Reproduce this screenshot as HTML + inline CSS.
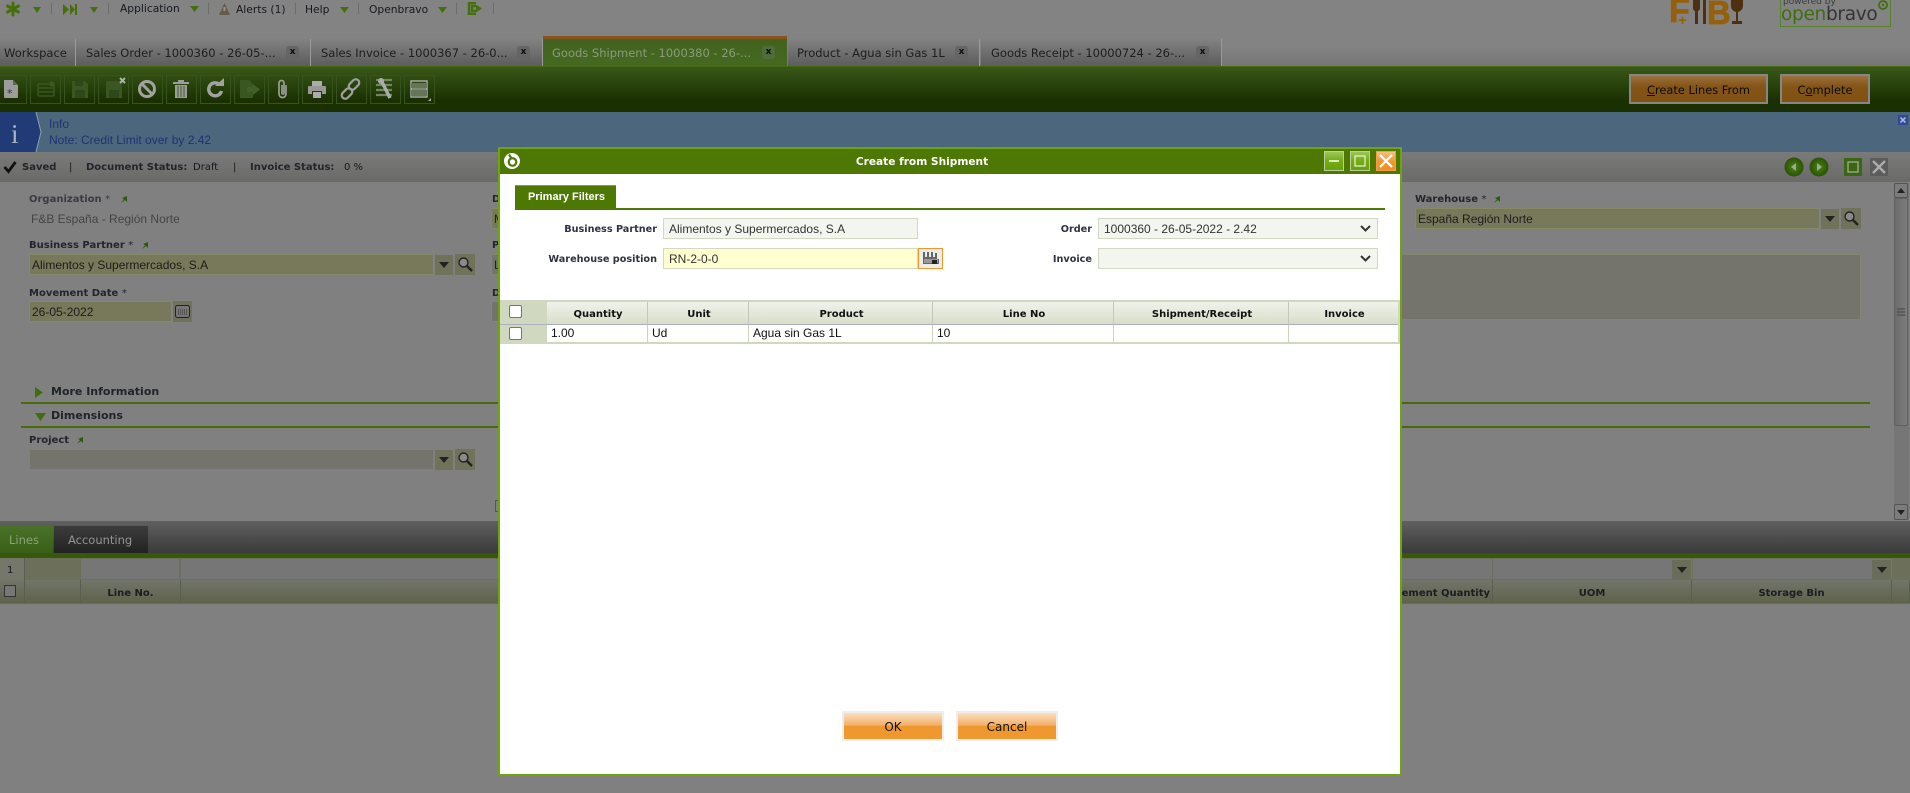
<!DOCTYPE html>
<html><head><meta charset="utf-8"><title>Create from Shipment</title>
<style>
html,body{margin:0;padding:0;width:1910px;height:793px;overflow:hidden;background:#808080}
body{position:relative;font-family:"DejaVu Sans",sans-serif;font-size:10px;color:#15181f}
div,span.a,svg{position:absolute}
.t{position:absolute;white-space:nowrap;line-height:14px;height:14px}
.top{font-size:10.7px;top:3px}
.tb{font-size:11.5px;top:46px;color:#1d1d1d}
.l{font-family:"Liberation Sans",sans-serif;font-size:12px}
.b{font-weight:bold;color:#24242c}
.sep{width:1px;height:11px;top:3px;background:#6c6c6c}
.tab{top:39px;height:27px;background:linear-gradient(#828282,#5c5c5c);border-right:1px solid #9a9a9a}
.x{top:46px;width:13px;height:13px;background:#656565;border-radius:3px;color:#0c0c0c;font-size:9px;font-weight:bold;line-height:12px;text-align:center}
.box{top:75px;width:29px;height:27px;border:1px solid #375420}
.inp{background:#78785a;border:1px solid #858966;box-sizing:border-box}
.btn{background:#70725a;box-sizing:border-box}
.hd{top:580px;height:23px;background:linear-gradient(#72756a,#5f6349);border-right:1px solid #5a5e4e;box-sizing:border-box;text-align:center;line-height:27px;font-weight:bold;color:#1a1d24;overflow:hidden;white-space:nowrap}
.dlab{font-weight:bold;color:#2d3344;text-align:right;font-size:9.7px}
.dinp{background:#f3f6ee;border:1px solid #d2d9c2;box-sizing:border-box}
.th{top:302px;height:23px;background:linear-gradient(#f0f2ec,#d8dec8);border-right:1px solid #c3c8bc;border-bottom:1px solid #a9afbb;box-sizing:border-box;text-align:center;line-height:26px;font-weight:bold;color:#111;padding-left:2px}
.td{top:325px;height:17px;background:#fff;border-right:1px solid #ccd4ba;box-sizing:border-box;font-family:"Liberation Sans",sans-serif;font-size:12px;line-height:16px;padding-left:4px;color:#111}
.cb{width:13px;height:13px;background:#fff;border:1px solid #767676;border-radius:2px;box-sizing:border-box}
.ok{top:711px;width:102px;height:30px;border:2px solid #eeeeee;box-sizing:border-box;background:linear-gradient(#fbe0c2,#f3ae65 48%,#f09830 50%,#f09830);text-align:center;font-size:12px;line-height:28px;color:#111}
.ob{top:74px;height:30px;border:2px solid #868686;box-sizing:border-box;background:linear-gradient(#9a703e,#855518 40%,#805112);text-align:center;font-size:11.4px;line-height:28px;color:#0c0c0c}
.sec{font-size:11px;font-weight:bold;color:#20232b}
</style></head><body>

<!-- top bar -->
<div style="left:0;top:0;width:1910px;height:66px;background:linear-gradient(#838383 0,#838383 70%,#767676)"></div>
<svg style="left:5px;top:1px" width="16" height="16" viewBox="0 0 16 16"><path d="M8 2v12M2.500 5l11 6M13.500 5l-11 6" stroke="#44700a" stroke-width="3" stroke-linecap="round"/></svg>
<svg style="left:32px;top:6px" width="10" height="8"><path d="M1 1h8L5 7z" fill="#44700a"/></svg>
<div class="sep" style="left:51px"></div>
<svg style="left:62px;top:3px" width="16" height="13"><path d="M1 1l6 5.500L1 12zM8 1l5 5.500L8 12z" fill="#44700a"/><rect x="13" y="1" width="2" height="11" fill="#44700a"/></svg>
<svg style="left:89px;top:6px" width="10" height="8"><path d="M1 1h8L5 7z" fill="#44700a"/></svg>
<div class="sep" style="left:108px"></div>
<div class="t top" style="left:120px;top:2px">Application</div>
<svg style="left:189px;top:5px" width="11" height="8"><path d="M1 1h9L5.500 7z" fill="#44700a"/></svg>
<div class="sep" style="left:208px"></div>
<svg style="left:218px;top:2px" width="13" height="14"><path d="M6.500 1L12 13H1z" fill="#665a48"/><path d="M5.500 5h2v4h-2z" fill="#989280"/></svg>
<div class="t top" style="left:236px">Alerts (1)</div>
<div class="sep" style="left:295px"></div>
<div class="t top" style="left:305px">Help</div>
<svg style="left:339px;top:6px" width="11" height="8"><path d="M1 1h9L5.500 7z" fill="#44700a"/></svg>
<div class="sep" style="left:358px"></div>
<div class="t top" style="left:369px">Openbravo</div>
<svg style="left:437px;top:6px" width="11" height="8"><path d="M1 1h9L5.500 7z" fill="#44700a"/></svg>
<div class="sep" style="left:456px"></div>
<svg style="left:467px;top:2px" width="16" height="13"><path d="M9 1H2v11h7M9 4H5v5h4" fill="none" stroke="#44700a" stroke-width="2.400"/><path d="M9 2.500l6 4-6 4z" fill="#44700a"/></svg>
<div class="sep" style="left:493px"></div>

<!-- logos -->
<svg style="left:1668px;top:0" width="86" height="26" viewBox="0 0 86 26">
<text x="1" y="22" font-family="Liberation Sans" font-weight="bold" font-size="34" fill="#94600c" stroke="#94600c" stroke-width=".8">F</text>
<text x="10" y="25" font-family="Liberation Sans" font-weight="bold" font-size="15" fill="#94600c">+</text>
<path d="M25 0v8a3 3 0 0 0 2 3v13h3V11a3 3 0 0 0 2-3V0z" fill="#4e2f0e"/><path d="M35 0h3v24h-3z" fill="#4e2f0e"/>
<text x="39" y="24" font-family="Liberation Sans" font-weight="bold" font-size="33" fill="#94600c" stroke="#94600c" stroke-width=".8">B</text>
<path d="M63 0h12v6a6 6 0 0 1-5 6v9h4v3h-10v-3h4v-9a6 6 0 0 1-5-6z" fill="#4e2f0e"/>
</svg>
<div style="left:1780px;top:-2px;width:109px;height:27px;border:1px solid #56822a"></div>
<svg style="left:1781px;top:0" width="110" height="26">
<text x="2" y="4" font-family="DejaVu Sans" font-size="9" fill="#3c3c3c">powered by</text>
<text x="0" y="20" font-family="DejaVu Sans" font-size="18.500" letter-spacing="-.3" fill="#3e6e0e">open<tspan fill="#343434">bravo</tspan></text>
<circle cx="102" cy="5" r="4" fill="none" stroke="#3e6e0e" stroke-width="1.800"/><circle cx="102" cy="5" r="1.200" fill="#3e6e0e"/>
</svg>

<!-- tabs -->
<div class="tab" style="left:0;width:75px"></div>
<div class="tab" style="left:76px;width:234px"></div>
<div class="tab" style="left:311px;width:231px"></div>
<div class="tab" style="left:543px;width:244px;background:linear-gradient(#41621d,#466a22);border:0;border-top:3px solid #8a5320;top:36px;height:30px"></div>
<div class="tab" style="left:788px;width:191px"></div>
<div class="tab" style="left:981px;width:240px"></div>
<div class="t tb" style="left:4px">Workspace</div>
<div class="t tb" style="left:86px;width:192px;overflow:hidden">Sales Order - 1000360 - 26-05-...</div>
<div class="x" style="left:286px">x</div>
<div class="t tb" style="left:321px;width:190px;overflow:hidden">Sales Invoice - 1000367 - 26-0...</div>
<div class="x" style="left:517px">x</div>
<div class="t tb" style="left:552px;width:205px;overflow:hidden;color:#8b9a7e">Goods Shipment - 1000380 - 26-...</div>
<div class="x" style="left:762px;background:#506c3c">x</div>
<div class="t tb" style="left:797px">Product - Agua sin Gas 1L</div>
<div class="x" style="left:955px">x</div>
<div class="t tb" style="left:991px;width:200px;overflow:hidden">Goods Receipt - 10000724 - 26-...</div>
<div class="x" style="left:1196px">x</div>

<!-- toolbar -->
<div style="left:0;top:66px;width:1910px;height:46px;background:linear-gradient(#385819,#1a3000 75%,#1a3000);border-top:1px solid #466a14;box-sizing:border-box"></div>
<div class="box" style="left:-4px"></div><div class="box" style="left:30px"></div><div class="box" style="left:64px"></div><div class="box" style="left:98px"></div><div class="box" style="left:132px"></div><div class="box" style="left:166px"></div><div class="box" style="left:200px"></div><div class="box" style="left:234px"></div><div class="box" style="left:268px"></div><div class="box" style="left:302px"></div><div class="box" style="left:336px"></div><div class="box" style="left:370px"></div><div class="box" style="left:404px"></div>
<svg style="left:0;top:75px" width="440" height="30" viewBox="0 0 440 30">
<path d="M4 5h9l5 5v12a1 1 0 0 1-1 1H5a1 1 0 0 1-1-1z" fill="#9c9c9c"/><path d="M13 5v5h5z" fill="#5e6a52"/><text x="7" y="22" font-size="11" font-family="DejaVu Sans" fill="#333">*</text>
<g fill="none" stroke="#3c5a26" stroke-width="1.300"><rect x="38" y="9" width="16" height="12" rx="1"/><path d="M38 13h16M38 17h16"/></g><circle cx="52" cy="9" r="2.500" fill="#3c5a26"/>
<path d="M72 6h13l3 3v14H72z" fill="#3a5722"/><path d="M75 6h8v5h-8zM75 15h10v8H75z" fill="#2e4819"/>
<path d="M106 6h13l3 3v14h-16z" fill="#3a5722"/><path d="M109 15h10v8h-10z" fill="#2e4819"/><path d="M120 3l5 5M125 3l-5 5" stroke="#b0b0b0" stroke-width="2"/>
<circle cx="147" cy="14" r="7.500" fill="none" stroke="#a2a2a2" stroke-width="3"/><path d="M142 9l10 10" stroke="#a2a2a2" stroke-width="3"/>
<path d="M173 7h16v2h-16zM178 5h6v2h-6z" fill="#9c9c9c"/><path d="M175 10h12v13h-12z" fill="#9c9c9c"/><path d="M178 11v11M181 11v11M184 11v11" stroke="#3f5a24" stroke-width="1"/>
<path d="M221.500 16a6.500 6.500 0 1 1-2.500-7" fill="none" stroke="#a2a2a2" stroke-width="3.400"/><path d="M215 11h9V3z" fill="#a2a2a2"/>
<path d="M240 5h9l4 4v14h-13z" fill="#3a5722"/><path d="M247 12h6V9l7 5.500-7 5.500v-3h-6z" fill="#415f28"/>
<path d="M286 10v9a3.500 3.500 0 0 1-7 0V8a2.500 2.500 0 0 1 5 0v10a1 1 0 0 1-2 0V10" fill="none" stroke="#9c9c9c" stroke-width="1.700"/>
<path d="M312 6h10v5h-10zM313 17h8v6h-8z" fill="#acacac"/><path d="M309 11h16a1 1 0 0 1 1 1v7h-4v-3h-10v3h-4v-7a1 1 0 0 1 1-1z" fill="#989898"/>
<g fill="none" stroke="#a0a0a0" stroke-width="2.200"><rect x="341" y="15" width="12" height="7" rx="3.500" transform="rotate(-45 347 18.500)"/><rect x="348" y="6" width="12" height="7" rx="3.500" transform="rotate(-45 354 9.500)"/></g>
<path d="M376 5h16M376 10h16M376 15h16M376 20h16" stroke="#728460" stroke-width="2.200" fill="none"/><path d="M381 5l9 18" stroke="#acacac" stroke-width="3.400"/><circle cx="381" cy="6" r="3" fill="#acacac"/>
<rect x="411" y="6" width="16" height="16" fill="none" stroke="#a8a8a8" stroke-width="1.500"/><path d="M411 8h16v5h-16z M411 15h16v6h-16z" fill="#667458"/><path d="M411 14h16" stroke="#bcbcbc" stroke-width="1.200"/><path d="M428 26l3-3v3z" fill="#a8a8a8"/>
</svg>
<div class="ob" style="left:1629px;width:139px"><u>C</u>reate Lines From</div>
<div class="ob" style="left:1780px;width:90px">C<u>o</u>mplete</div>

<!-- info -->
<div style="left:0;top:112px;width:1910px;height:40px;background:#4c667e"></div>
<svg style="left:0;top:112px" width="44" height="40"><path d="M0 0h36l5 20-5 20H0z" fill="#203b76"/><path d="M36 0l5 20-5 20" fill="none" stroke="#8aa0b8"/><text x="11" y="31" font-family="Liberation Serif" font-size="27" fill="#b0b4bc">i</text></svg>
<div class="t l" style="left:49px;top:117px;color:#1f3370">Info</div>
<div class="t l" style="left:49px;top:133px;color:#1f3370">Note: Credit Limit over by 2.42</div>
<svg style="left:1898px;top:115px" width="10" height="10"><rect width="10" height="10" rx="1" fill="#2d4a98"/><path d="M2.500 2.500l5 5M7.500 2.500l-5 5" stroke="#a8b8d0" stroke-width="1.600"/></svg>

<!-- status -->
<div style="left:0;top:152px;width:1910px;height:30px;background:linear-gradient(#7a7a7a,#6a6a68)"></div>
<svg style="left:3px;top:160px" width="14" height="14"><path d="M1.500 7l4 4.500L12.500 2" fill="none" stroke="#111" stroke-width="2.800"/></svg>
<div class="t b" style="left:22px;top:161px">Saved</div><div class="t" style="left:69px;top:161px">|</div>
<div class="t b" style="left:86px;top:161px">Document Status:</div><div class="t" style="left:193px;top:161px">Draft</div><div class="t" style="left:233px;top:161px">|</div>
<div class="t b" style="left:250px;top:161px">Invoice Status:</div><div class="t" style="left:344px;top:161px">0 %</div>
<svg style="left:1784px;top:157px" width="110" height="20">
<defs><radialGradient id="g"><stop offset="0" stop-color="#4a8210"/><stop offset="1" stop-color="#2a5208"/></radialGradient></defs>
<circle cx="10" cy="10" r="9.500" fill="url(#g)"/><path d="M12 6v8l-5-4z" fill="#a0a894"/>
<circle cx="35" cy="10" r="9.500" fill="url(#g)"/><path d="M33 6v8l5-4z" fill="#a0a894"/>
<rect x="60" y="1" width="18" height="18" fill="#3a6616"/><rect x="64" y="5" width="10" height="10" fill="none" stroke="#a8b49c" stroke-width="1.200"/>
<rect x="86" y="1" width="18" height="18" fill="#5c5c5c"/><path d="M89 4l12 12M101 4l-12 12" stroke="#acacac" stroke-width="2.400"/>
</svg>

<!-- form -->
<div class="t b" style="left:29px;top:193px;color:#3a3a42">Organization <span style="font-weight:normal">*</span></div>
<div class="t l" style="left:31px;top:212px;color:#444">F&amp;B España - Región Norte</div>
<svg style="left:120px;top:195px" width="8" height="9"><path d="M1 8l3-4-2-1 5-2v6L5 5z" fill="#2a5a0a"/></svg>
<div class="t b" style="left:29px;top:239px">Business Partner <span style="font-weight:normal">*</span></div>
<svg style="left:141px;top:241px" width="8" height="9"><path d="M1 8l3-4-2-1 5-2v6L5 5z" fill="#2a5a0a"/></svg>
<div class="inp" style="left:29px;top:254px;width:405px;height:21px"></div><div class="t l" style="left:32px;top:258px;color:#1c1c1c">Alimentos y Supermercados, S.A</div>
<div class="btn" style="left:435px;top:255px;width:18px;height:20px"></div><svg style="left:439px;top:262px" width="10" height="6"><path d="M0 0h10L5 6z" fill="#222"/></svg>
<div class="btn" style="left:455px;top:254px;width:20px;height:21px"></div><svg style="left:457px;top:256px" width="16" height="16"><circle cx="6.500" cy="6.500" r="4.500" fill="#8a8a8a" stroke="#222" stroke-width="1.400"/><path d="M10 10l5 5" stroke="#222" stroke-width="2.400"/></svg>
<div class="t b" style="left:29px;top:287px">Movement Date <span style="font-weight:normal">*</span></div>
<div class="inp" style="left:29px;top:301px;width:143px;height:21px"></div><div class="t l" style="left:32px;top:305px;color:#1c1c1c">26-05-2022</div>
<div class="btn" style="left:173px;top:301px;width:19px;height:21px"></div><svg style="left:175px;top:305px" width="15" height="13"><rect x=".5" y=".5" width="14" height="12" rx="2" fill="#777" stroke="#222"/><path d="M3 5h9M3 7h9M3 9h9" stroke="#333" stroke-dasharray="1 1"/></svg>

<div class="t b" style="left:492px;top:193px">D</div><div class="inp" style="left:491px;top:208px;width:10px;height:21px"></div><div class="t l" style="left:494px;top:212px;color:#222">M</div>
<div class="t b" style="left:492px;top:239px">P</div><div class="inp" style="left:491px;top:254px;width:10px;height:21px;background:#74746c"></div><div class="t l" style="left:494px;top:258px;color:#222">L</div>
<div class="t b" style="left:492px;top:287px">D</div><div class="inp" style="left:491px;top:301px;width:10px;height:21px;background:#74746c"></div>

<div class="t b" style="left:1415px;top:193px">Warehouse <span style="font-weight:normal">*</span></div>
<svg style="left:1493px;top:195px" width="8" height="9"><path d="M1 8l3-4-2-1 5-2v6L5 5z" fill="#2a5a0a"/></svg>
<div class="inp" style="left:1415px;top:208px;width:405px;height:21px"></div><div class="t l" style="left:1418px;top:212px;color:#1c1c1c">España Región Norte</div>
<div class="btn" style="left:1821px;top:209px;width:18px;height:20px"></div><svg style="left:1825px;top:216px" width="10" height="6"><path d="M0 0h10L5 6z" fill="#222"/></svg>
<div class="btn" style="left:1841px;top:208px;width:20px;height:21px"></div><svg style="left:1843px;top:210px" width="16" height="16"><circle cx="6.500" cy="6.500" r="4.500" fill="#8a8a8a" stroke="#222" stroke-width="1.400"/><path d="M10 10l5 5" stroke="#222" stroke-width="2.400"/></svg>
<div style="left:1390px;top:254px;width:471px;height:66px;box-sizing:border-box;border:1px solid #84866a;background:#74746c"></div>

<!-- scrollbar -->
<div style="left:1894px;top:183px;width:15px;height:337px;background:#767676"></div>
<div style="left:1894px;top:183px;width:14px;height:15px;background:#7c7c7c;border:1px solid #555;border-radius:2px;box-sizing:border-box"></div>
<svg style="left:1897px;top:188px" width="8" height="5"><path d="M0 5h8L4 0z" fill="#222"/></svg>
<div style="left:1894px;top:198px;width:14px;height:228px;background:linear-gradient(90deg,#6c6c6c,#7c7c7c);border:1px solid #606060;box-sizing:border-box;border-radius:2px"></div>
<svg style="left:1896px;top:308px" width="10" height="9"><path d="M1 1h8M1 4h8M1 7h8" stroke="#444"/></svg>
<div style="left:1894px;top:504px;width:14px;height:16px;background:#7c7c7c;border:1px solid #555;border-radius:2px;box-sizing:border-box"></div>
<svg style="left:1897px;top:510px" width="8" height="5"><path d="M0 0h8L4 5z" fill="#222"/></svg>

<!-- sections -->
<svg style="left:35px;top:387px" width="8" height="11"><path d="M0 0l8 5.500L0 11z" fill="#3f6e0c"/></svg>
<div class="t sec" style="left:51px;top:385px">More Information</div>
<div style="left:21px;top:402px;width:1849px;height:2px;background:#476a0a"></div>
<svg style="left:35px;top:413px" width="11" height="8"><path d="M0 0h11L5.500 8z" fill="#3f6e0c"/></svg>
<div class="t sec" style="left:51px;top:409px">Dimensions</div>
<div style="left:21px;top:426px;width:1849px;height:2px;background:#476a0a"></div>
<div class="t b" style="left:29px;top:434px">Project</div>
<svg style="left:76px;top:436px" width="8" height="9"><path d="M1 8l3-4-2-1 5-2v6L5 5z" fill="#2a5a0a"/></svg>
<div style="left:29px;top:449px;width:405px;height:21px;background:#74746c;border:1px solid #80836b;box-sizing:border-box"></div>
<div class="btn" style="left:435px;top:450px;width:18px;height:20px"></div><svg style="left:439px;top:457px" width="10" height="6"><path d="M0 0h10L5 6z" fill="#222"/></svg>
<div class="btn" style="left:455px;top:449px;width:20px;height:21px"></div><svg style="left:457px;top:451px" width="16" height="16"><circle cx="6.500" cy="6.500" r="4.500" fill="#8a8a8a" stroke="#222" stroke-width="1.400"/><path d="M10 10l5 5" stroke="#222" stroke-width="2.400"/></svg>
<div style="left:495px;top:500px;width:6px;height:12px;border:1px solid #555;box-sizing:border-box"></div>

<!-- lower tabs -->
<div style="left:0;top:521px;width:1910px;height:32px;background:linear-gradient(#606060,#3a3a3a)"></div>
<div style="left:0;top:526px;width:53px;height:27px;background:linear-gradient(#497228,#386016)"></div>
<div style="left:54px;top:526px;width:94px;height:27px;background:linear-gradient(#3c3c3c,#222)"></div>
<div class="t" style="left:9px;top:533px;font-size:11.500px;color:#8ea080">Lines</div>
<div class="t" style="left:68px;top:533px;font-size:11.500px;color:#949494">Accounting</div>
<div style="left:0;top:553px;width:1910px;height:5px;background:#38570d"></div>

<!-- grid filter -->
<div style="left:0;top:558px;width:1910px;height:22px;background:#6c6f5a"></div>
<div style="left:0;top:558px;width:24px;height:22px;background:#74776a;border-right:1px solid #5a5d50"></div>
<div class="t" style="left:7px;top:564px">1</div>
<div style="left:81px;top:559px;width:98px;height:20px;background:#767676"></div>
<div style="left:181px;top:559px;width:1311px;height:20px;background:#767676"></div>
<div style="left:1493px;top:559px;width:199px;height:20px;background:#767676"></div>
<div class="btn" style="left:1672px;top:560px;width:19px;height:19px;background:#6a6d5a"></div><svg style="left:1677px;top:567px" width="10" height="6"><path d="M0 0h10L5 6z" fill="#222"/></svg>
<div style="left:1693px;top:559px;width:199px;height:20px;background:#767676"></div>
<div class="btn" style="left:1872px;top:560px;width:19px;height:19px;background:#6a6d5a"></div><svg style="left:1877px;top:567px" width="10" height="6"><path d="M0 0h10L5 6z" fill="#222"/></svg>

<!-- grid header -->
<div class="hd" style="left:0;width:25px"></div>
<div class="hd" style="left:25px;width:56px"></div>
<div class="hd" style="left:81px;width:100px">Line No.</div>
<div class="hd" style="left:181px;width:1312px;text-align:right;padding-right:2px">Movement Quantity</div>
<div class="hd" style="left:1493px;width:199px">UOM</div>
<div class="hd" style="left:1692px;width:200px">Storage Bin</div>
<div class="hd" style="left:1892px;width:18px"></div>
<div style="left:4px;top:585px;width:12px;height:12px;background:#777;border:1px solid #333;box-sizing:border-box"></div>
<div style="left:0;top:603px;width:1910px;height:1px;background:#686868"></div>

<!-- dialog -->
<div style="left:498px;top:147px;width:904px;height:629px;background:#fff;border:2px solid #6fa40e;box-sizing:border-box"></div>
<div style="left:500px;top:149px;width:900px;height:25px;background:#4e7804"></div>
<svg style="left:503px;top:152px" width="18" height="18"><circle cx="9" cy="9" r="8" fill="#fff"/><circle cx="9.500" cy="10" r="3.800" fill="none" stroke="#4e7804" stroke-width="2.200"/><path d="M6 2.500l2.500 4" stroke="#4e7804" stroke-width="2.200"/></svg>
<div class="t" style="left:500px;width:844px;top:155px;text-align:center;font-weight:bold;font-size:10.600px;color:#fff">Create from Shipment</div>
<svg style="left:1324px;top:151px" width="72" height="20">
<defs><linearGradient id="gb" x1="0" y1="0" x2="0" y2="1"><stop offset="0" stop-color="#9ec85c"/><stop offset=".5" stop-color="#74ac14"/><stop offset="1" stop-color="#68a00c"/></linearGradient><linearGradient id="go" x1="0" y1="0" x2="0" y2="1"><stop offset="0" stop-color="#f7c184"/><stop offset=".5" stop-color="#f09a32"/><stop offset="1" stop-color="#ee8f1e"/></linearGradient></defs>
<rect x=".5" y=".5" width="19" height="19" fill="url(#gb)" stroke="#b8d098"/><path d="M5 10h10" stroke="#fff" stroke-width="1.500"/>
<rect x="26.500" y=".5" width="19" height="19" fill="url(#gb)" stroke="#b8d098"/><rect x="31" y="5" width="10" height="10" fill="none" stroke="#eaf4d8" stroke-width="1.200"/>
<rect x="52.500" y=".5" width="19" height="19" fill="url(#go)" stroke="#f0a050"/><path d="M56 4l12 12M68 4L56 16" stroke="#fff" stroke-width="2.200"/>
</svg>
<div style="left:515px;top:185px;width:101px;height:23px;background:#4e7804;border-top:1px solid #7ea24a;box-sizing:border-box"></div>
<div style="left:515px;top:208px;width:870px;height:2px;background:#4e7804"></div>
<div class="t" style="left:528px;top:190px;font-family:'Liberation Sans',sans-serif;font-weight:bold;font-size:11px;color:#fff">Primary Filters</div>

<div class="t dlab" style="left:540px;width:117px;top:223px">Business Partner</div>
<div class="dinp" style="left:663px;top:218px;width:255px;height:21px"></div><div class="t l" style="left:669px;top:222px;color:#333">Alimentos y Supermercados, S.A</div>
<div class="t dlab" style="left:540px;width:117px;top:253px">Warehouse position</div>
<div class="dinp" style="left:663px;top:248px;width:255px;height:21px;background:#ffffd0"></div><div class="t l" style="left:669px;top:252px;color:#333">RN-2-0-0</div>
<div style="left:918px;top:248px;width:25px;height:21px;background:#ececE8;border:1px solid #f0962e;box-sizing:border-box"></div>
<svg style="left:922px;top:250px" width="17" height="16"><path d="M1 14V2h2v5h2V2h2v5h2V2h2v5h2V3h2v6h2v5z" fill="#666"/><path d="M2 10h14M2 12h14" stroke="#ccc"/><rect x="10" y="10" width="5" height="4" fill="#222"/></svg>

<div class="t dlab" style="left:1000px;width:92px;top:223px">Order</div>
<div class="dinp" style="left:1098px;top:218px;width:280px;height:21px"></div><div class="t l" style="left:1104px;top:222px;color:#333">1000360 - 26-05-2022 - 2.42</div>
<svg style="left:1360px;top:225px" width="11" height="7"><path d="M1 1l4.500 4.500L10 1" fill="none" stroke="#333" stroke-width="2"/></svg>
<div class="t dlab" style="left:1000px;width:92px;top:253px">Invoice</div>
<div class="dinp" style="left:1098px;top:248px;width:280px;height:21px"></div>
<svg style="left:1360px;top:255px" width="11" height="7"><path d="M1 1l4.500 4.500L10 1" fill="none" stroke="#333" stroke-width="2"/></svg>

<!-- dialog table -->
<div style="left:500px;top:300px;width:900px;height:44px;background:#d0d9c0"></div>
<div class="th" style="left:547px;width:101px">Quantity</div>
<div class="th" style="left:648px;width:101px">Unit</div>
<div class="th" style="left:749px;width:184px">Product</div>
<div class="th" style="left:933px;width:181px">Line No</div>
<div class="th" style="left:1114px;width:175px">Shipment/Receipt</div>
<div class="th" style="left:1289px;width:109px;border-right:0">Invoice</div>
<div class="td" style="left:547px;width:101px">1.00</div>
<div class="td" style="left:648px;width:101px">Ud</div>
<div class="td" style="left:749px;width:184px">Agua sin Gas 1L</div>
<div class="td" style="left:933px;width:181px">10</div>
<div class="td" style="left:1114px;width:175px"></div>
<div class="td" style="left:1289px;width:109px;border-right:0"></div>
<div style="left:500px;top:324px;width:47px;height:1px;background:#aab0bc"></div>
<div class="cb" style="left:509px;top:305px"></div>
<div class="cb" style="left:509px;top:327px"></div>

<div class="ok" style="left:842px">OK</div>
<div class="ok" style="left:956px">Cancel</div>
</body></html>
